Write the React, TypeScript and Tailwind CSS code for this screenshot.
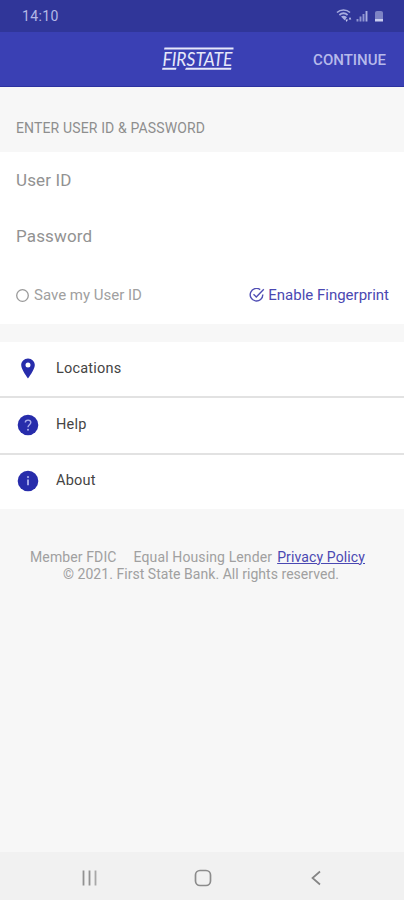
import { useState } from "react";
import type { ReactNode } from "react";

function StatusBar() {
  return (
    <div className="flex h-8 shrink-0 items-center justify-between bg-[#303699] pl-[22px] pr-[20px]">
      <span className="text-[14px] leading-4 tracking-[0.4px] text-[#b4b9e6]">14:10</span>
      <svg width="48" height="16" viewBox="0 0 48 16" fill="none">
        {/* Wifi */}
        <path d="M1 4.5C4.5 1.2 10.5 1.2 14 4.5" stroke="#a9aee0" strokeWidth="1.6" />
        <path d="M3.4 7C6 4.8 9 4.8 11.6 7" stroke="#a9aee0" strokeWidth="1.8" />
        <path d="M5 8.6L8.6 12.2L11 9.2C9 7.5 6.6 7.5 5 8.6Z" fill="#a9aee0" />
        <path d="M9.3 11.5L10.7 14L12 11.5ZM12.7 11.5L14 9L15.3 11.5Z" fill="#c5c9ee" />
        {/* Signal */}
        <path d="M21.5 13.5V11M24.5 13.5V8.5M27.5 13.5V6" stroke="#8f95d2" strokeWidth="1.9" />
        <path d="M30.5 13.5V3" stroke="#a9aee0" strokeWidth="1.9" />
        {/* Battery */}
        <path d="M39 4.5Q39 3 41 3H45Q47 3 47 4.5V11H39Z" fill="#7d83c4" />
        <path d="M39 11h8v2.5h-8Z" fill="#c8ccef" />
      </svg>
    </div>
  );
}

function Logo() {
  return (
    <svg width="72" height="26" viewBox="0 0 72 26" fill="#e6e8fa" className="overflow-visible">
      <path d="M2.5 1.5H71.5V3.4H2Z" />
      <text
        x="0.5"
        y="19.8"
        textLength="70"
        lengthAdjust="spacingAndGlyphs"
        fontFamily="Lato, sans-serif"
        fontStyle="italic"
        fontSize="20"
      >
        FIRSTATE
      </text>
      <path d="M0.5 21.8H14.5L14 23.8H0Z" />
      <path d="M24 21.8H69.5L69 23.8H23Z" />
    </svg>
  );
}

function MenuRow({ icon, label }: { icon: ReactNode; label: string }) {
  return (
    <button className="box-content flex h-[54.5px] items-center bg-white pl-[18px] text-left">
      <span className="flex w-5 justify-center pb-px">{icon}</span>
      <span className="ml-[18px] pb-px text-[14.5px] leading-5 tracking-[0.2px] text-[#444]">{label}</span>
    </button>
  );
}

export default function App() {
  const [saveId, setSaveId] = useState(false);

  return (
    <div className="flex h-[900px] w-[404px] flex-col overflow-hidden bg-[#f7f7f7] font-[Roboto,sans-serif]">
      <StatusBar />

      <header className="flex h-[55px] shrink-0 items-center justify-between border-b border-[#2c32a0] bg-[#3a40b4] pl-[162px] pr-[18px]">
        <Logo />
        <button className="pt-0.5 text-[15px] font-medium leading-5 text-[#b6baeb]">CONTINUE</button>
      </header>

      <h1 className="flex h-[65px] shrink-0 items-center pl-4 pt-[17px] text-[14px] tracking-[0.14px] text-[#8e8e8e]">
        ENTER USER ID &amp; PASSWORD
      </h1>

      {/* Credentials */}
      <section className="h-[172px] shrink-0 bg-white">
        <input
          placeholder="User ID"
          className="block h-14 w-full px-4 text-[17px] tracking-[0.15px] outline-none placeholder:text-[#929292]"
        />
        <input
          type="password"
          placeholder="Password"
          className="block h-14 w-full px-4 text-[17px] tracking-[0.15px] outline-none placeholder:text-[#929292]"
        />
        <div className="flex h-[60px] items-center justify-between pl-4 pr-[15px] pt-[3px] text-[15px]">
          <button onClick={() => setSaveId(!saveId)} className="flex items-center gap-[5px] text-[#a0a0a0]">
            <svg width="13" height="14" viewBox="0 0 13 14" fill="none" stroke="#999">
              <circle cx="6.5" cy="6.5" r="5.8" strokeWidth="1.3" />
              {saveId && <circle cx="6.5" cy="6.5" r="3" fill="#999" />}
            </svg>
            Save my User ID
          </button>
          <button className="flex items-center gap-[3px] text-[#4a48b2]">
            <svg width="16" height="16" viewBox="0 0 16 16" fill="none" stroke="#504eb4" strokeWidth="1.4">
              <path d="M11.2 1.6A6.3 6.3 0 1 0 13.8 6.5" />
              <path d="M4.5 6.2L7.3 8.9L14.8 1.2" />
            </svg>
            Enable Fingerprint
          </button>
        </div>
      </section>

      {/* Links */}
      <nav className="mt-[18px] flex h-[167px] shrink-0 flex-col divide-y-2 divide-[#e2e2e2] bg-white">
        <MenuRow
          label="Locations"
          icon={
            <svg width="14" height="21" viewBox="0 0 14 21">
              <path
                fillRule="evenodd"
                fill="#272cab"
                d="M7 0.4C3.2 0.4 0.2 3.4 0.2 7.1C0.2 11.9 7 20.4 7 20.4S13.8 11.9 13.8 7.1C13.8 3.4 10.8 0.4 7 0.4ZM7 4.6A2.5 2.5 0 1 1 7 9.6A2.5 2.5 0 1 1 7 4.6Z"
              />
            </svg>
          }
        />
        <MenuRow
          label="Help"
          icon={
            <svg width="22" height="22" viewBox="0 0 22 22" className="shrink-0">
              <circle cx="11" cy="11" r="10.3" fill="#272cab" />
              <path
                d="M8.3 8.5C8.3 5.3 13.8 5.3 13.8 8.5C13.8 10.5 11 10.9 11 13.2"
                fill="none"
                stroke="#a9acea"
                strokeWidth="1.4"
              />
              <circle cx="11" cy="15.7" r="1" fill="#a9acea" />
            </svg>
          }
        />
        <MenuRow
          label="About"
          icon={
            <svg width="22" height="22" viewBox="0 0 22 22" className="shrink-0">
              <circle cx="11" cy="11" r="10.3" fill="#272cab" />
              <path d="M11 9.5V15.2" fill="none" stroke="#a9acea" strokeWidth="1.9" />
              <circle cx="11" cy="7.1" r="1.1" fill="#a9acea" />
            </svg>
          }
        />
      </nav>

      <footer className="mt-[39.5px] text-[14px] leading-[17px] text-[#a0a0a0]">
        <p className="flex pl-[30px] tracking-[0.12px]">
          <span>Member FDIC</span>
          <span className="ml-[17px]">Equal Housing Lender</span>
          <a href="#privacy" className="ml-[5px] text-[#4a48b2] underline">
            Privacy Policy
          </a>
        </p>
        <p className="pl-[63px] tracking-[0.04px]">© 2021. First State Bank. All rights reserved.</p>
      </footer>

      {/* Android navigation */}
      <div className="mt-auto flex h-12 shrink-0 items-center justify-between bg-[#f1f1f1] pl-[81px] pr-[80px] pt-1">
        <svg width="17" height="16" viewBox="0 0 17 16" fill="none" strokeWidth="1.8">
          <path d="M2.5 0.5V15.5M8.5 0.5V15.5" stroke="#929292" />
          <path d="M14.5 0.5V15.5" stroke="#a8a8a8" />
        </svg>
        <svg width="18" height="18" viewBox="0 0 18 18" fill="none" stroke="#8c8c8c" strokeWidth="1.7">
          <rect x="1.5" y="1.5" width="15" height="15" rx="4.5" />
        </svg>
        <svg width="16" height="16" viewBox="0 0 16 16" fill="none" stroke="#858585" strokeWidth="1.7">
          <path d="M12 1.5L4.5 8L12 14.5" />
        </svg>
      </div>
    </div>
  );
}
